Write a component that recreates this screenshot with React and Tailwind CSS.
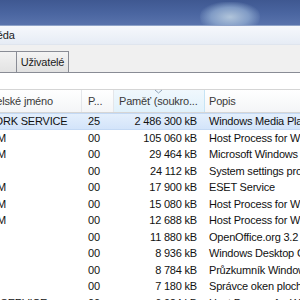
import React from 'react';

const rows = [
  { user: 'NETWORK SERVICE', cpu: '25', mem: '2 486 300 kB', desc: 'Windows Media Player Network Sharing Service', selected: true },
  { user: 'SYSTEM', cpu: '00', mem: '105 060 kB', desc: 'Host Process for Windows Services' },
  { user: 'SYSTEM', cpu: '00', mem: '29 464 kB', desc: 'Microsoft Windows Search Indexer' },
  { user: '', cpu: '00', mem: '24 112 kB', desc: 'System settings proxy' },
  { user: 'SYSTEM', cpu: '00', mem: '17 900 kB', desc: 'ESET Service' },
  { user: 'SYSTEM', cpu: '00', mem: '15 080 kB', desc: 'Host Process for Windows Services' },
  { user: 'SYSTEM', cpu: '00', mem: '12 688 kB', desc: 'Host Process for Windows Services' },
  { user: '', cpu: '00', mem: '11 880 kB', desc: 'OpenOffice.org 3.2' },
  { user: '', cpu: '00', mem: '8 936 kB', desc: 'Windows Desktop Gadgets' },
  { user: '', cpu: '00', mem: '8 784 kB', desc: 'Průzkumník Windows' },
  { user: '', cpu: '00', mem: '7 180 kB', desc: 'Správce oken plochy' },
  { user: 'LOCAL SERVICE', cpu: '00', mem: '6 924 kB', desc: 'Host Process for Windows Services' },
];

// how far each user name is pushed past the left edge (column starts off-screen)
const userShift = {
  'NETWORK SERVICE': 'ml-[-37px]',
  SYSTEM: 'ml-[-38px]',
  'LOCAL SERVICE': 'ml-[-37px]',
  '': '',
};

export default function App() {
  return (
    <div className="w-[300px] h-[300px] overflow-hidden bg-white text-[11px] tracking-[-0.2px] text-black" style={{ fontFamily: '"Liberation Sans", Arial, sans-serif' }}>
      {/* title bar glass */}
      <div className="relative h-[26px] bg-gradient-to-b from-[#3f5891] via-[#4a65a0] to-[#5a74ad] overflow-hidden">
        <div className="absolute left-[200px] top-[2px] w-[60px] h-[30px] rounded-full bg-[radial-gradient(ellipse_at_center,#c9dbe8_0%,#8ea9cf_45%,transparent_75%)] opacity-80" />
        <div className="absolute left-0 right-0 bottom-0 h-[1px] bg-[#8fa3c8]" />
      </div>

      {/* menu bar */}
      <div className="h-[19px] bg-gradient-to-b from-[#f6f8fc] to-[#e6ecf5] border-b border-[#dfe5ee] flex items-center overflow-hidden">
        <span className="ml-[-34px] whitespace-nowrap text-[#1b1b1b]">Nápověda</span>
      </div>

      {/* tab strip */}
      <div className="h-[28px] bg-[#f0f0f0] flex items-end border-b border-[#898c95]">
        <div className="w-[17px] h-[21px] border border-l-0 border-b-0 border-[#898c95] bg-gradient-to-b from-[#f2f2f2] to-[#e3e3e3]" />
        <div className="h-[21px] w-[52px] flex items-center justify-center border border-l-0 border-b-0 border-[#898c95] bg-gradient-to-b from-[#f4f4f4] to-[#e1e1e1] text-[#1b1b1b]">
          Uživatelé
        </div>
      </div>

      {/* panel padding */}
      <div className="h-[16px] bg-white" />

      {/* column header */}
      <div className="relative h-[24px] flex border-t border-b border-[#d5d5d5] bg-gradient-to-b from-white to-[#f4f5f7] text-[#3a3a3a] whitespace-nowrap">
        <div className="w-[82px] flex items-center border-r border-[#e4e6ea] overflow-hidden">
          <span className="ml-[-33px]">Uživatelské jméno</span>
        </div>
        <div className="w-[32px] flex items-center pl-[6px] border-r border-[#e4e6ea]">P...</div>
        <div className="w-[91px] flex items-center pl-[5px] bg-gradient-to-b from-[#f0f8fd] to-[#e1f1fb] border-r border-[#c6e4f5] relative">
          Paměť (soukro...
          <svg className="absolute left-[40px] top-[-1px]" width="9" height="5" viewBox="0 0 9 5">
            <path d="M1 1 L4.5 4 L8 1" fill="none" stroke="#8fa3b8" strokeWidth="1" />
          </svg>
        </div>
        <div className="flex-1 flex items-center pl-[4px]">Popis</div>
      </div>

      {/* rows */}
      <div className="flex flex-col">
        {rows.map((r, i) => (
          <div
            key={i}
            className={
              r.selected
                ? 'h-[16.5px] flex items-center whitespace-nowrap bg-gradient-to-b from-[#e4effc] to-[#d3e4fa] border-y border-[#c4d9f4]'
                : 'h-[16.5px] flex items-center whitespace-nowrap'
            }
          >
            <div className="w-[82px] overflow-hidden text-[#111]">
              <span className={userShift[r.user]}>{r.user}</span>
            </div>
            <div className="w-[32px] pl-[6px] text-[#111]">{r.cpu}</div>
            <div className="w-[91px] text-right pr-[8px] text-[#111]">{r.mem}</div>
            <div className="flex-1 pl-[4px] overflow-hidden text-[#111]">{r.desc}</div>
          </div>
        ))}
      </div>
    </div>
  );
}
